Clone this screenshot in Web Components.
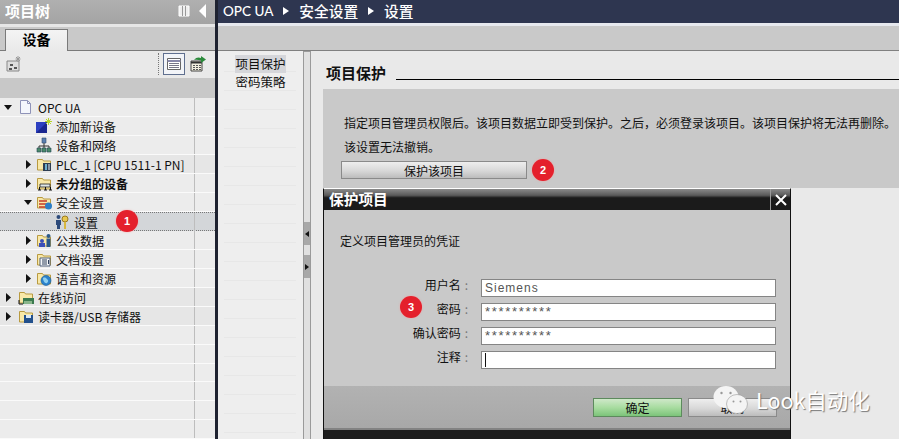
<!DOCTYPE html>
<html lang="zh">
<head>
<meta charset="utf-8">
<title>项目保护</title>
<style>
    html, body {
        margin: 0;
        height: 100%;
        overflow: hidden;
        background: #e9e9e9;
        font-family: "Noto Sans CJK SC", "Liberation Sans", sans-serif;
        font-size: 12px;
        color: #111;
    }
    portal-view {
        height: 439px;
    }
</style>
</head>
<body>
<portal-view></portal-view>

<script>
const folder = `<path d="M1.5 14V3.5h5l1 1.5h7V14z" fill="#f8e8a8" stroke="#b89a40"/>`;

const icons = {
    doc: `<path d="M2.5 1.5h7l3 3v10h-10z" fill="#f4f6fc" stroke="#8f93b8"/><path d="M9.5 1.5v3h3" fill="none" stroke="#8f93b8"/>`,
    add: `<path d="M0 4h11v11H0z" fill="#2c3fc0"/><path d="M0 15L11 4v11z" fill="#1a2790"/><path d="M12.5 0v7M9 3.500h7M10 1l5 5M15 1l-5 5" stroke="#b6d428" stroke-width="1"/>`,
    net: `<path d="M6 1h4v5H6z" fill="#5a7fb0" stroke="#2f4a70" stroke-width=".6"/><path d="M8 6v3M3 12V9h10v3M8 9v3" fill="none" stroke="#333"/><path d="M1 11h4v4H1zM6 11h4v4H6zM11 11h4v4h-4z" fill="#4a8a6a" stroke="#245" stroke-width=".6"/>`,
    plc: `${folder}<path d="M7 7h8v8H7z" fill="#2d3d52"/><path d="M9 8h2v6H9z" fill="#6fb0d0"/><path d="M12 8h2v6h-2z" fill="#8a98a8"/>`,
    group: `${folder}<path d="M4 9h10v3H4z" fill="#dfe8e8" stroke="#222" stroke-width=".8"/><path d="M2 15h3M8 15h3M13 15h3M3.500 12v3M9.500 12v3M14.500 12v3" stroke="#111"/>`,
    secure: `${folder}<path d="M3 7h8M3 10h8M3 13h8" stroke="#c23a28" stroke-width="1.600"/><circle cx="12.500" cy="12" r="3.500" fill="#2c7fc8"/>`,
    key: `<circle cx="4.500" cy="3" r="2" fill="#2c4a7a"/><path d="M2 6h5v5H6v4H3v-4H2z" fill="#2c4a7a"/><circle cx="11" cy="5" r="3" fill="#e8c850" stroke="#9a7a20"/><path d="M10 8h2v7h-2z" fill="#d8b840"/>`,
    shared: `${folder}<circle cx="6" cy="9" r="2" fill="#3c50b8"/><path d="M3 11h6v4H3z" fill="#3c50b8"/><circle cx="12.500" cy="4" r="2" fill="#2c5a8a"/><path d="M10.500 6.500h4V15h-4z" fill="#2c5a8a"/>`,
    text: `${folder}<path d="M4 7h10v8H4z" fill="#f4f6f8" stroke="#50607a"/><path d="M6 9h5M6 11h5M6 13h5M12.500 9v4" stroke="#30405a"/>`,
    lang: `${folder}<circle cx="10" cy="10.500" r="5" fill="#2c82cc" stroke="#175a94" stroke-width=".6"/><path d="M7 8c2-1 3 0 4 1s2 2 0 4c-2 1-4-2-4-5z" fill="#8fd0f0"/>`,
    online: `${folder}<path d="M5 9h11v6H5z" fill="#3b7a4e"/><path d="M7 15v-3M9 15v-3M11 15v-3M13 15v-3" stroke="#d8f0c8"/><path d="M1 11v4h4" fill="none" stroke="#111"/>`,
    card: `${folder}<path d="M6 7h9v8H6z" fill="#22508c"/><path d="M8 7h5v3H8z" fill="#dce8f4"/>`
};

// icon in its 16px box
class TreeIcon extends HTMLElement {
    constructor() {
        super();
        this.attachShadow({mode: 'open'});
    }
    connectedCallback() {
        this.shadowRoot.innerHTML = `
            <style>
                :host { display: block; width: 16px; height: 16px; }
                svg { display: block; }
            </style>
            <svg width="16" height="16" viewBox="0 0 16 16">${icons[this.getAttribute('name')] || ''}</svg>
        `;
    }
}
customElements.define('tree-icon', TreeIcon);

class StepBadge extends HTMLElement {
    constructor() {
        super();
        this.attachShadow({mode: 'open'});
    }
    connectedCallback() {
        this.shadowRoot.innerHTML = `
            <style>
                :host {
                    display: flex;
                    align-items: center;
                    justify-content: center;
                    width: 22px;
                    height: 22px;
                    border-radius: 50%;
                    background: #e4202c;
                    color: #fff;
                    font: bold 11px "Liberation Sans", sans-serif;
                    box-shadow: 0 0 2px rgba(255, 150, 150, .8);
                }
            </style>
            <slot></slot>
        `;
    }
}
customElements.define('step-badge', StepBadge);

class TreeRow extends HTMLElement {
    constructor() {
        super();
        this.attachShadow({mode: 'open'});
    }
    connectedCallback() {
        const level = Number(this.getAttribute('level') || 0);
        const open = this.getAttribute('arrow');
        const arrow = open === 'open'
            ? '<polygon points="0,2 8,2 4,7" fill="#111"/>'
            : open === 'closed' ? '<polygon points="2,0 7,4.500 2,9" fill="#111"/>' : '';
        const icon = this.getAttribute('icon');
        this.shadowRoot.innerHTML = `
            <style>
                :host {
                    display: grid;
                    grid-template-columns: 194px 21px;
                    height: 19px;
                    box-sizing: border-box;
                    border-bottom: 1px solid #fafafa;
                    background: #ececec;
                }
                :host([alt]) { background: #e6e6e6; }
                :host([selected]) {
                    background: #d3d6d9;
                    border-top: 1px dotted #777;
                    border-bottom: 1px dotted #777;
                }
                :host([bold]) .name { font-weight: bold; }
                .name {
                    display: flex;
                    align-items: center;
                    padding: 1px 0 0 ${level * 18 + 4}px;
                    white-space: nowrap;
                    font-size: 12px;
                    color: #111;
                }
                .arrow { width: 14px; flex: none; }
                .arrow svg { display: block; margin-left: ${level ? 2 : 0}px; }
                tree-icon { flex: none; margin: -1px 4px 0 0; }
                .extra { border-left: 1px solid #bdbdbd; }
            </style>
            <div class="name">
                <div class="arrow"><svg width="9" height="9" viewBox="0 0 9 9">${arrow}</svg></div>
                ${icon ? `<tree-icon name="${icon}"></tree-icon>` : ''}
                <slot></slot>
            </div>
            <div class="extra"></div>
        `;
    }
}
customElements.define('tree-row', TreeRow);

class ProjectTree extends HTMLElement {
    constructor() {
        super();
        this.attachShadow({mode: 'open'});
    }
    connectedCallback() {
        this.shadowRoot.innerHTML = `
            <style>
                :host {
                    display: flex;
                    flex-direction: column;
                    height: 100%;
                    overflow: hidden;
                    background: #ececec;
                }
                .title {
                    display: flex;
                    align-items: center;
                    height: 24px;
                    flex: none;
                    box-sizing: border-box;
                    padding: 0 8px 3px 5px;
                    background: linear-gradient(#b0b0b0, #a4a4a4);
                    color: #fff;
                    font-size: 15px;
                    font-weight: bold;
                }
                .title span { flex: 1; }
                .title svg { display: block; margin-left: 9px; }
                .strip { height: 3px; flex: none; background: #e6e6e6; }
                .tabs {
                    display: flex;
                    align-items: flex-end;
                    height: 24px;
                    flex: none;
                    box-sizing: border-box;
                    padding-left: 5px;
                    background: #c9c9c9;
                    border-bottom: 1px solid #7a7a7a;
                }
                .tab {
                    width: 63px;
                    height: 22px;
                    box-sizing: border-box;
                    margin-bottom: -1px;
                    border: 1px solid #7a7a7a;
                    border-bottom: 0;
                    background: linear-gradient(#f4f4f4, #e9e9e9);
                    text-align: center;
                    font-size: 14px;
                    line-height: 19px;
                    font-weight: bold;
                    color: #000;
                }
                .toolbar {
                    display: flex;
                    align-items: center;
                    height: 27px;
                    flex: none;
                    box-sizing: border-box;
                    padding: 0 0 2px 6px;
                    background: #e9e9e9;
                }
                .toolbar .tool { display: block; }
                .sep { margin-left: auto; height: 22px; border-left: 1px dotted #777; }
                .view {
                    display: flex;
                    align-items: center;
                    justify-content: center;
                    width: 20px;
                    height: 20px;
                    margin: 0 5px 0 4px;
                    border: 1px solid #5f6f8f;
                    background: #f2f4f8;
                }
                .end { width: 9px; flex: none; }
                .band { height: 20px; flex: none; background: #c8c8c8; }
            </style>
            <div class="title">
                <span>项目树</span>
                <svg width="12" height="12" viewBox="0 0 12 12"><path d="M1 1h10v10H1z" fill="#eee" stroke="#fff"/><path d="M7.500 1v10M4.500 1v10" stroke="#999"/></svg>
                <svg width="8" height="14" viewBox="0 0 8 14"><polygon points="7,0 7,14 0,7" fill="#fff"/></svg>
            </div>
            <div class="strip"></div>
            <div class="tabs"><div class="tab">设备</div></div>
            <div class="toolbar">
                <svg class="tool" width="16" height="16" viewBox="0 0 16 16"><path d="M1 5h12v10H1z" fill="#ddd" stroke="#888"/><path d="M4 8h3v2H4zM8 11h3v2H8zM3 12h3v2H3z" fill="#555"/><path d="M12 0v6M9.500 3h5M10 1l4 4M14 1l-4 4" stroke="#999"/></svg>
                <div class="sep"></div>
                <div class="view">
                    <svg width="14" height="12" viewBox="0 0 14 12"><path d="M.5.500h13v11H.5z" fill="#fff" stroke="#666"/><path d="M.5 3h13" stroke="#88a" stroke-width="2"/><path d="M2 5.500h10M2 7.500h10M2 9.500h10" stroke="#778"/></svg>
                </div>
                <svg class="tool" width="16" height="16" viewBox="0 0 16 16"><path d="M1 5h11v10H1z" fill="#f2efe0" stroke="#444"/><path d="M1 6.500h11" stroke="#333" stroke-width="2"/><path d="M3 9.500h2M6 9.500h2M9 9.500h2M3 11.500h2M6 11.500h2M9 11.500h2M3 13.500h2M6 13.500h2M9 13.500h2" stroke="#555"/><path d="M4 4c2-3 5-3 7-2V0l5 3.500L11 7V4.500C8 3.500 6 3.500 4 4z" fill="#2a8a3a"/></svg>
                <div class="end"></div>
            </div>
            <div class="band"></div>
            <slot></slot>
        `;
    }
}
customElements.define('project-tree', ProjectTree);

class FormField extends HTMLElement {
    constructor() {
        super();
        this.attachShadow({mode: 'open'});
    }
    connectedCallback() {
        const caret = this.hasAttribute('caret') ? '<i></i>' : '';
        this.shadowRoot.innerHTML = `
            <style>
                :host {
                    display: grid;
                    grid-template-columns: 128px 295px;
                    column-gap: 13px;
                    align-items: center;
                    height: 18px;
                    font-size: 12px;
                    color: #111;
                }
                .label { text-align: right; white-space: nowrap; margin-bottom: 6px; }
                .label b { display: inline-block; font-weight: normal; color: #777; margin-left: 4px; }
                .input {
                    display: flex;
                    align-items: center;
                    height: 18px;
                    box-sizing: border-box;
                    padding-left: 3px;
                    border: 1px solid #858585;
                    background: #fff;
                    color: #555;
                    font: 12px/14px "Liberation Sans", sans-serif;
                    letter-spacing: 1px;
                }
                :host([secret]) .input { letter-spacing: 1.700px; font-size: 13px; }
                i { display: block; width: 1px; height: 14px; background: #111; }
            </style>
            <div class="label">${this.getAttribute('label')}<b>:</b></div>
            <div class="input"><slot></slot>${caret}</div>
        `;
    }
}
customElements.define('form-field', FormField);

class ChromeButton extends HTMLElement {
    constructor() {
        super();
        this.attachShadow({mode: 'open'});
    }
    connectedCallback() {
        this.shadowRoot.innerHTML = `
            <style>
                :host {
                    display: flex;
                    align-items: center;
                    justify-content: center;
                    box-sizing: border-box;
                    height: 19px;
                    border: 1px solid #8a8a8a;
                    background: linear-gradient(#eeeeee, #d8d8d8 55%, #bcbcbc);
                    font-size: 12px;
                    color: #111;
                }
                :host([primary]) {
                    border-color: #5d8a5d;
                    background: linear-gradient(#cfe8c9, #a8dca0 50%, #7cc47a);
                }
            </style>
            <slot></slot>
        `;
    }
}
customElements.define('chrome-button', ChromeButton);

class ProtectDialog extends HTMLElement {
    constructor() {
        super();
        this.attachShadow({mode: 'open'});
    }
    connectedCallback() {
        this.shadowRoot.innerHTML = `
            <style>
                :host {
                    display: flex;
                    flex-direction: column;
                    box-sizing: border-box;
                    width: 468px;
                    height: 251px;
                    border-top: 1px solid #fff;
                    border-right: 1px solid #111;
                    border-left: 1px solid #111;
                    background: #c9c9c9;
                }
                .bar {
                    display: flex;
                    align-items: stretch;
                    height: 21px;
                    flex: none;
                    background: linear-gradient(#8a8a8a, #5a5a5a 30%, #1b1b1b 42%, #1b1b1b);
                    color: #fff;
                    font-size: 14.700px;
                    font-weight: bold;
                    line-height: 20px;
                    padding-left: 5px;
                }
                .bar span { flex: 1; }
                .close {
                    display: flex;
                    align-items: center;
                    justify-content: center;
                    width: 19px;
                    border-left: 1px solid #9a9a9a;
                }
                .close svg { display: block; }
                .body {
                    flex: 1;
                    display: flex;
                    flex-direction: column;
                    position: relative;
                    padding: 24px 0 0 16px;
                    box-sizing: border-box;
                }
                .intro { font-size: 12px; line-height: 14px; color: #111; height: 42px; }
                .fields { display: flex; flex-direction: column; gap: 6px; }
                step-badge { position: absolute; left: 76px; top: 86px; }
                .foot {
                    display: flex;
                    justify-content: flex-end;
                    gap: 6px;
                    height: 44px;
                    flex: none;
                    box-sizing: border-box;
                    padding: 12px 13px 0 0;
                    background: linear-gradient(#b2b2b2, #a8a8a8);
                    border-bottom: 2px solid #828282;
                }
                .foot chrome-button { width: 89px; }
                .base { height: 9px; flex: none; background: #1c1c1c; }
            </style>
            <div class="bar">
                <span>保护项目</span>
                <div class="close"><svg width="12" height="12" viewBox="0 0 12 12"><path d="M1 1l10 10M11 1L1 11" stroke="#fff" stroke-width="2"/></svg></div>
            </div>
            <div class="body">
                <div class="intro">定义项目管理员的凭证</div>
                <div class="fields">
                    <form-field label="用户名">Siemens</form-field>
                    <form-field label="密码" secret>**********</form-field>
                    <form-field label="确认密码" secret>**********</form-field>
                    <form-field label="注释" caret></form-field>
                </div>
                <step-badge>3</step-badge>
            </div>
            <div class="foot">
                <chrome-button primary>确定</chrome-button>
                <chrome-button>取消</chrome-button>
            </div>
            <div class="base"></div>
        `;
    }
}
customElements.define('protect-dialog', ProtectDialog);

class WxMark extends HTMLElement {
    constructor() {
        super();
        this.attachShadow({mode: 'open'});
    }
    connectedCallback() {
        this.shadowRoot.innerHTML = `
            <style>
                :host {
                    display: flex;
                    align-items: center;
                    gap: 8px;
                    color: #fff;
                    font-size: 21.500px;
                    white-space: nowrap;
                    text-shadow: 1px 1px 1px #777;
                }
                svg { display: block; }
            </style>
            <svg width="35" height="30" viewBox="0 0 35 30">
                <ellipse cx="13" cy="12" rx="12.500" ry="11" fill="#f4f4f4"/>
                <ellipse cx="24" cy="19" rx="10.500" ry="9.500" fill="#f4f4f4" stroke="#999" stroke-width=".6"/>
                <circle cx="8.500" cy="8" r="1.200" fill="#999"/><circle cx="17.500" cy="8" r="1.200" fill="#999"/>
                <circle cx="20.500" cy="16.500" r="1" fill="#999"/><circle cx="27.500" cy="16.500" r="1" fill="#999"/>
            </svg>
            <span>Look自动化</span>
        `;
    }
}
customElements.define('wx-mark', WxMark);

class EditorPane extends HTMLElement {
    constructor() {
        super();
        this.attachShadow({mode: 'open'});
    }
    connectedCallback() {
        const tri = '<svg width="6" height="8" viewBox="0 0 6 8"><polygon points="0,0 6,4 0,8" fill="#fff"/></svg>';
        this.shadowRoot.innerHTML = `
            <style>
                :host {
                    display: flex;
                    flex-direction: column;
                    height: 100%;
                    overflow: hidden;
                    position: relative;
                    background: #e9e9e9;
                }
                .crumbs {
                    display: flex;
                    align-items: center;
                    gap: 10px;
                    height: 23px;
                    flex: none;
                    box-sizing: border-box;
                    padding: 0 0 2px 5px;
                    background: #2e3650;
                    color: #fff;
                    font-size: 14.700px;
                    font-weight: 500;
                }
                .crumbs em { font: 500 13.500px Lato, sans-serif; }
                .crumbs svg { display: block; }
                .strip { height: 3px; flex: none; background: #e6e8ee; }
                .band {
                    height: 25px;
                    flex: none;
                    box-sizing: border-box;
                    background: #c9c9c9;
                    border-bottom: 1px solid #808080;
                }
                .main { flex: 1; display: flex; min-height: 0; }
                nav {
                    width: 85px;
                    flex: none;
                    box-sizing: border-box;
                    padding: 4px 0 0 17px;
                    background:
                        repeating-linear-gradient(transparent 0 18px, #e7e7e7 18px 19px) 6px 2px / 72px 100% no-repeat,
                        #eeeeee;
                    font-size: 12.500px;
                }
                nav div { width: 51px; height: 18px; line-height: 18px; text-align: center; color: #111; white-space: nowrap; }
                nav .on { background: #d5d6da; }
                .split {
                    display: flex;
                    flex-direction: column;
                    width: 8px;
                    flex: none;
                    box-sizing: border-box;
                    padding-top: 170px;
                    border: solid #9a9a9a;
                    border-width: 1px 1px 0;
                    background: #e0e0e0;
                }
                .grip {
                    display: flex;
                    align-items: center;
                    justify-content: center;
                    height: 23px;
                    margin-bottom: 10px;
                    background: #a8a8a8;
                }
                .grip svg { display: block; }
                .content { flex: 1; min-width: 0; padding-left: 12px; display: flex; flex-direction: column; }
                .heading {
                    display: flex;
                    align-items: flex-end;
                    gap: 10px;
                    height: 33px;
                    flex: none;
                    box-sizing: border-box;
                    padding-left: 3px;
                    font-size: 15px;
                    font-weight: bold;
                    line-height: 22px;
                    color: #111;
                }
                .heading i { flex: 1; height: 1px; background: #000; margin-bottom: 4px; }
                .panel {
                    height: 99px;
                    flex: none;
                    box-sizing: border-box;
                    margin-top: 5px;
                    padding: 26px 0 0 21px;
                    background: #c9c9c9;
                    font-size: 12px;
                    line-height: 15px;
                    color: #111;
                    white-space: nowrap;
                }
                .panel p { margin: 0 0 9px; }
                .act { display: flex; align-items: center; gap: 5px; margin-top: -4px; }
                .act chrome-button { width: 186px; height: 18px; margin-left: -3px; }
                protect-dialog { position: absolute; left: 105px; top: 188px; }
                wx-mark { position: absolute; left: 495px; top: 384px; }
            </style>
            <div class="crumbs">
                <em>OPC UA</em>${tri}<span>安全设置</span>${tri}<span>设置</span>
            </div>
            <div class="strip"></div>
            <div class="band"></div>
            <div class="main">
                <nav>
                    <div class="on">项目保护</div>
                    <div>密码策略</div>
                </nav>
                <div class="split">
                    <div class="grip"><svg width="4" height="6" viewBox="0 0 4 6"><polygon points="4,0 4,6 0,3" fill="#111"/></svg></div>
                    <div class="grip"><svg width="4" height="6" viewBox="0 0 4 6"><polygon points="0,0 0,6 4,3" fill="#111"/></svg></div>
                </div>
                <div class="content">
                    <div class="heading"><span>项目保护</span><i></i></div>
                    <div class="panel">
                        <p>指定项目管理员权限后。该项目数据立即受到保护。之后，必须登录该项目。该项目保护将无法再删除。</p>
                        <p>该设置无法撤销。</p>
                        <div class="act"><chrome-button>保护该项目</chrome-button><step-badge>2</step-badge></div>
                    </div>
                </div>
            </div>
            <protect-dialog></protect-dialog>
            <wx-mark></wx-mark>
        `;
    }
}
customElements.define('editor-pane', EditorPane);

class PortalView extends HTMLElement {
    constructor() {
        super();
        this.attachShadow({mode: 'open'});
    }
    connectedCallback() {
        this.shadowRoot.innerHTML = `
            <style>
                :host {
                    display: grid;
                    grid-template-columns: 215px 3px 1fr;
                    width: 899px;
                }
                .rule { background: #1e2230; }
                step-badge { position: absolute; left: 116px; top: -2px; }
                .pin { position: relative; }
            </style>
            <project-tree>
                <tree-row arrow="open" icon="doc">OPC UA</tree-row>
                <tree-row level="1" icon="add">添加新设备</tree-row>
                <tree-row level="1" icon="net">设备和网络</tree-row>
                <tree-row level="1" arrow="closed" icon="plc" alt>PLC_1 [CPU 1511-1 PN]</tree-row>
                <tree-row level="1" arrow="closed" icon="group" bold>未分组的设备</tree-row>
                <tree-row level="1" arrow="open" icon="secure">安全设置</tree-row>
                <div class="pin">
                    <tree-row level="2" icon="key" selected>设置</tree-row>
                    <step-badge>1</step-badge>
                </div>
                <tree-row level="1" arrow="closed" icon="shared">公共数据</tree-row>
                <tree-row level="1" arrow="closed" icon="text">文档设置</tree-row>
                <tree-row level="1" arrow="closed" icon="lang">语言和资源</tree-row>
                <tree-row arrow="closed" icon="online" alt>在线访问</tree-row>
                <tree-row arrow="closed" icon="card" alt>读卡器/USB 存储器</tree-row>
                <tree-row></tree-row>
                <tree-row></tree-row>
                <tree-row></tree-row>
                <tree-row></tree-row>
                <tree-row></tree-row>
                <tree-row></tree-row>
            </project-tree>
            <div class="rule"></div>
            <editor-pane></editor-pane>
        `;
    }
}
customElements.define('portal-view', PortalView);
</script>
</body>
</html>
